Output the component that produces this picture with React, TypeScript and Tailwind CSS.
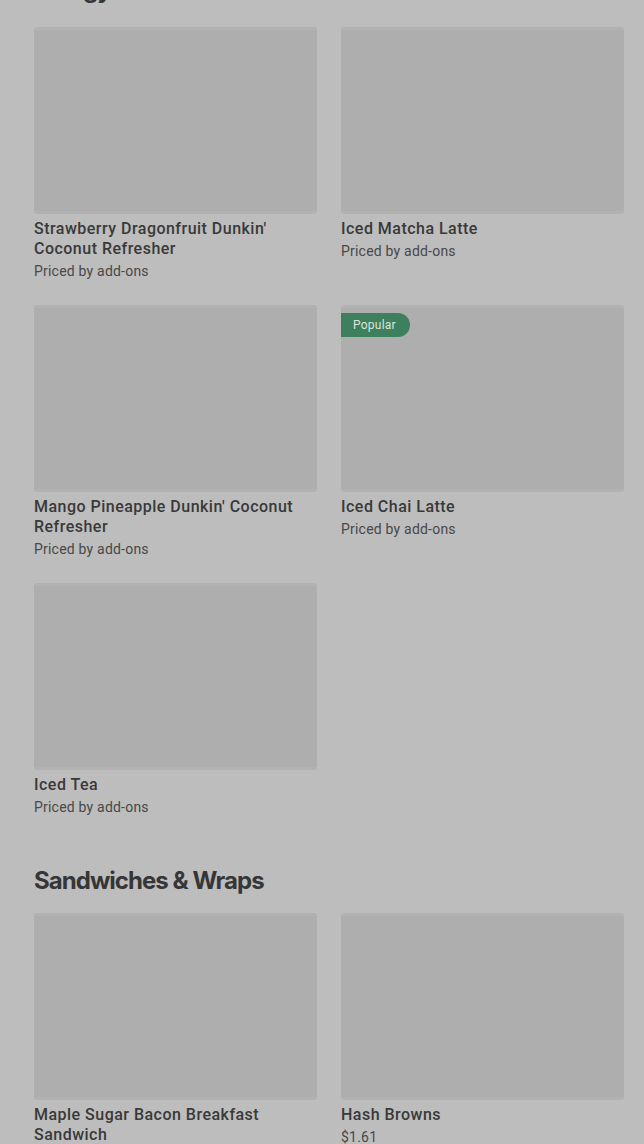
type Item = {
  name: string
  price: string
  badge?: string
}

const drinks: Item[] = [
  { name: "Strawberry Dragonfruit Dunkin' Coconut Refresher", price: "Priced by add-ons" },
  { name: "Iced Matcha Latte", price: "Priced by add-ons" },
  { name: "Mango Pineapple Dunkin' Coconut Refresher", price: "Priced by add-ons" },
  { name: "Iced Chai Latte", price: "Priced by add-ons", badge: "Popular" },
  { name: "Iced Tea", price: "Priced by add-ons" },
]

const sandwiches: Item[] = [
  { name: "Maple Sugar Bacon Breakfast Sandwich", price: "$1.61" },
  { name: "Hash Browns", price: "$1.61" },
]

function ItemCard({ item }: { item: Item }) {
  return (
    <div className="flex flex-col">
      <div className="relative h-[187px] w-full rounded-[3px] border-y-[3px] border-[#b2b2b2] bg-[#aeaeae]">
        {item.badge && (
          <span className="absolute left-0 top-[5px] rounded-r-full bg-[#3e7f5d] py-[3px] pl-3 pr-[14px] text-[12px] leading-[18px] tracking-[0.02em] text-[#d9e6de]">
            {item.badge}
          </span>
        )}
      </div>
      <p className="mt-[5px] text-[16px] font-medium leading-5 tracking-[0.03em] text-[#393939]">
        {item.name}
      </p>
      <p className="mt-0.5 text-[14px] leading-5 tracking-[0.015em] text-[#484848]">{item.price}</p>
    </div>
  )
}

function Section({
  title,
  items,
  className,
  gridClass,
}: {
  title: string
  items: Item[]
  className?: string
  gridClass?: string
}) {
  return (
    <section className={className}>
      <h2 className="font-['Inter',sans-serif] text-[24px] font-bold leading-8 tracking-[-0.04em] text-[#363636]">
        {title}
      </h2>
      <div className={`grid grid-cols-2 gap-x-6 gap-y-6 ${gridClass ?? "mt-4"}`}>
        {items.map((item) => (
          <ItemCard key={item.name} item={item} />
        ))}
      </div>
    </section>
  )
}

export default function App() {
  return (
    <div className="h-[1144px] overflow-hidden bg-[#bdbdbd] pl-[34px] pr-5 font-['Roboto',sans-serif]">
      <Section title="Energy Drinks" items={drinks} className="-mt-[26px]" gridClass="mt-[21px]" />
      <Section title="Sandwiches & Wraps" items={sandwiches} className="mt-12" />
    </div>
  )
}
